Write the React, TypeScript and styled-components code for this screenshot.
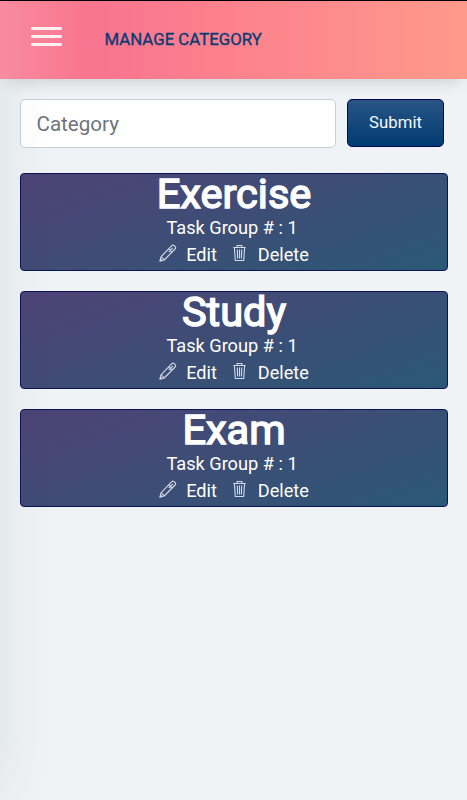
import React from "react";
import styled, { createGlobalStyle } from "styled-components";

const GlobalStyle = createGlobalStyle`
  * { box-sizing: border-box; }
  body { margin: 0; background: #eff3f6; font-family: Roboto, sans-serif; }
`;

const Page = styled.div`
  position: relative;
  height: 800px;
  overflow: hidden;
  background: #eff3f6;
`;

/* Closed drawer, parked off the left edge; only its shadow reaches the page. */
const Drawer = styled.aside`
  position: absolute;
  top: 0;
  left: -300px;
  width: 300px;
  height: 792px;
  pointer-events: none;
  box-shadow: 0 0 52px rgba(60, 70, 80, 0.1);
`;

const Header = styled.header`
  position: relative;
  display: flex;
  align-items: center;
  height: 79px;
  padding: 0 31px;
  border-top: 1px solid #000;
  background: linear-gradient(to right, #f78ca0 0%, #f9748f 19%, #fd868c 60%, #fe9a8b 100%);
  box-shadow: 0 8px 16px -6px rgba(0, 0, 0, 0.16);
`;

const MenuButton = styled.button`
  display: flex;
  flex-direction: column;
  gap: 5.3px;
  width: 31px;
  margin: -7px 42.5px 0 0;
  padding: 0;
  border: 0;
  background: none;
`;

const MenuBar = styled.span`
  height: 2.5px;
  border-radius: 1px;
  background: #fff0f3;
`;

const Title = styled.h1`
  margin: -2px 0 0;
  color: #073b74;
  font-size: 16.8px;
  line-height: 20px;
  font-weight: 400;
  white-space: nowrap;
  -webkit-text-stroke: 0.35px #073b74;
`;

const Form = styled.form`
  display: flex;
  gap: 11px;
  padding: 20px 23px 0 20px;
`;

const Input = styled.input`
  width: 316px;
  height: 49px;
  padding: 0 15.5px 0;
  border: 1px solid #c9d0d7;
  border-radius: 5px;
  background: #fff;
  font: 400 20.6px Roboto, sans-serif;
  &::placeholder { color: #6c757d; opacity: 1; }
`;

const Submit = styled.button`
  width: 97px;
  height: 48px;
  padding: 0 0 2px;
  border: 1px solid #000757;
  border-radius: 5px;
  background: linear-gradient(#2a5585, #003b71);
  color: #f5f8fb;
  font: 400 16.7px Roboto, sans-serif;
  letter-spacing: 0.1px;
`;

const List = styled.main`
  display: grid;
  gap: 20px;
  padding: 25px 19px 0 20px;
`;

const Card = styled.article`
  display: flow-root;
  height: 98px;
  border: 1px solid #0a1457;
  border-radius: 4px;
  background: linear-gradient(-20deg, #2b5876 0%, #4e4376 100%);
  color: #fff;
  text-align: center;
`;

const CardTitle = styled.h2`
  margin: -6px 0 -4px;
  font-size: 41.5px;
  line-height: 52px;
  font-weight: 400;
  -webkit-text-stroke: 1.5px #fff;
`;

const Count = styled.p`
  margin: 0 4px 0 0;
  font-size: 18.2px;
  line-height: 24px;
`;

const Actions = styled.div`
  display: flex;
  justify-content: center;
  gap: 14px;
  padding-top: 3px;
`;

const Action = styled.button`
  display: flex;
  gap: 9px;
  padding: 0;
  border: 0;
  background: none;
  color: #fff;
  font: 400 18.1px/24px Roboto, sans-serif;
`;

const Icon = styled.svg`
  width: 18px;
  height: 18px;
  margin-top: 1px;
  fill: none;
  stroke: #d5d9e6;
  stroke-width: 1.1;
  stroke-linejoin: round;
`;

const PencilIcon = () => (
  <Icon viewBox="0 0 18 18">
    <path d="M.9 17.1 2 12.8 12.8 1.7q1.1-1.1 2.3-.1l1.1 1.1q1 1.2-.1 2.3L5.2 16Z" />
    <path d="m2.2 12.8 3 3M9.8 4.8l3.2 3.2M13.9 3.9 9.8 8M.9 17.1l1.8-1.8" />
  </Icon>
);

const TrashIcon = () => (
  <Icon viewBox="0 0 18 18">
    <path d="M2.3 3.5h12.4M6 3.5v-2h5v2M3.4 3.5l.9 13h8.4l.9-13M6.3 5.5l.3 9M8.5 5.5v9M10.7 5.5l-.3 9" />
  </Icon>
);

const categories = [
  { name: "Exercise", group: 1 },
  { name: "Study", group: 1 },
  { name: "Exam", group: 1 },
];

export default function App() {
  return (
    <Page>
      <GlobalStyle />
      <Drawer />
      <Header>
        <MenuButton aria-label="Menu">
          <MenuBar />
          <MenuBar />
          <MenuBar />
        </MenuButton>
        <Title>MANAGE CATEGORY</Title>
      </Header>
      <Form>
        <Input placeholder="Category" />
        <Submit type="button">Submit</Submit>
      </Form>
      <List>
        {categories.map((category) => (
          <Card key={category.name}>
            <CardTitle>{category.name}</CardTitle>
            <Count>Task Group # : {category.group}</Count>
            <Actions>
              <Action>
                <PencilIcon />
                Edit
              </Action>
              <Action>
                <TrashIcon />
                Delete
              </Action>
            </Actions>
          </Card>
        ))}
      </List>
    </Page>
  );
}
